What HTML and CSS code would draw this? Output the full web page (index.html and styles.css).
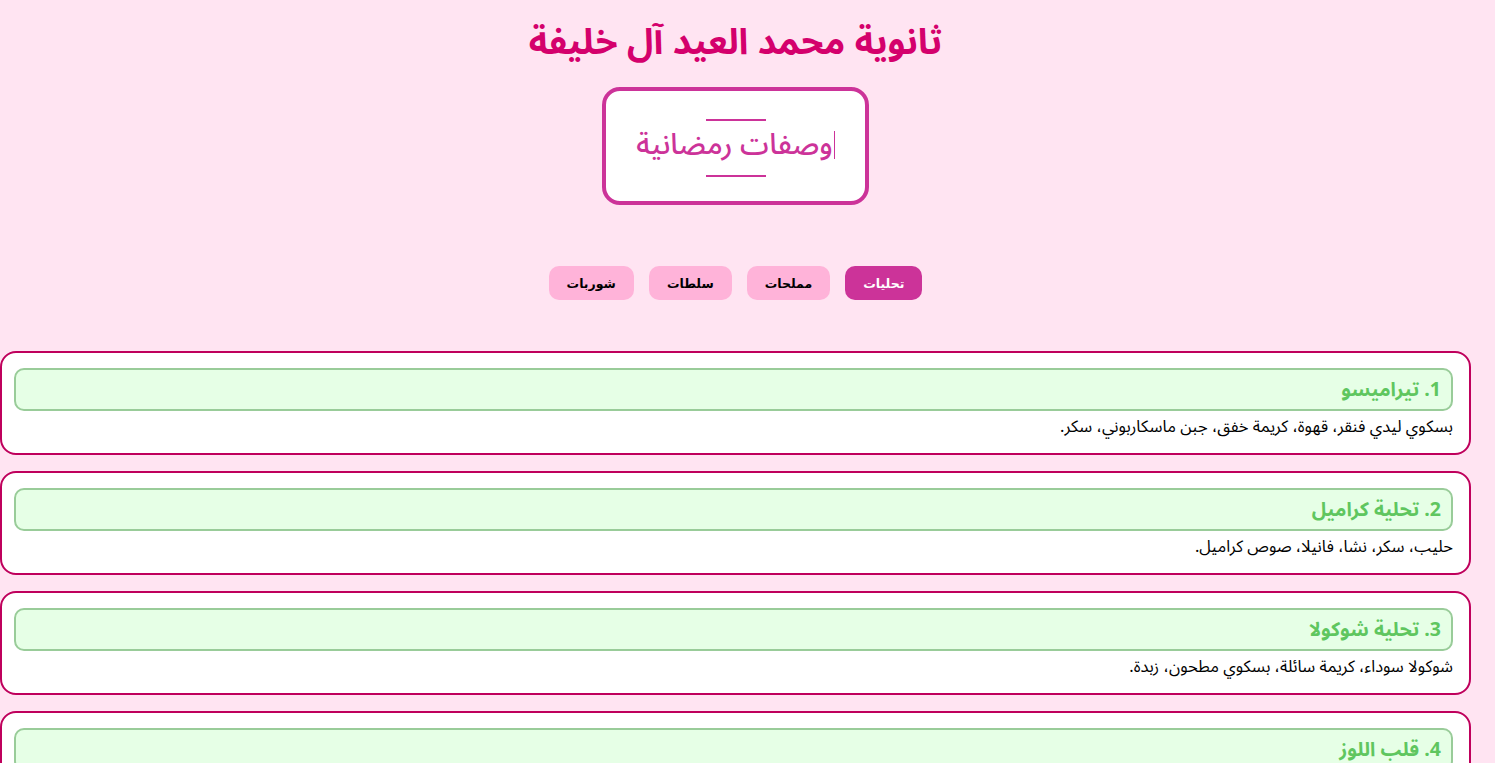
FILE: index.html
```html
<!DOCTYPE html>
<html lang="ar" dir="rtl">
<head>
    <meta charset="UTF-8">
    <meta name="viewport" content="width=device-width, initial-scale=1.0">
    <title>وصفات رمضانية</title>
    <link rel="stylesheet" href="styles.css">
</head>
<body>
    <div class="page">
        <h1>ثانوية محمد العيد آل خليفة</h1>

        <div class="banner">
            <span class="banner-line"></span>
            <h2 class="typing">وصفات رمضانية</h2>
            <span class="banner-line"></span>
        </div>

        <div class="tabs">
            <button class="tab active">تحليات</button>
            <button class="tab">مملحات</button>
            <button class="tab">سلطات</button>
            <button class="tab">شوربات</button>
        </div>

        <div class="recipes">
            <div class="recipe">
                <h3>1. تيراميسو</h3>
                <p>بسكوي ليدي فنقر، قهوة، كريمة خفق، جبن ماسكاربوني، سكر.</p>
            </div>
            <div class="recipe">
                <h3>2. تحلية كراميل</h3>
                <p>حليب، سكر، نشا، فانيلا، صوص كراميل.</p>
            </div>
            <div class="recipe">
                <h3>3. تحلية شوكولا</h3>
                <p>شوكولا سوداء، كريمة سائلة، بسكوي مطحون، زبدة.</p>
            </div>
            <div class="recipe">
                <h3>4. قلب اللوز</h3>
                <p>سميد، سكر، لوز، زبدة، ماء الزهر، عسل.</p>
            </div>
        </div>
    </div>
</body>
</html>
```

FILE: styles.css
```css
body {
    margin: 0;
    background-color: #ffe4f2;
    font-family: "Noto Sans Arabic", "Noto Naskh Arabic", "DejaVu Sans", sans-serif;
}

.page {
    margin-right: 24px;
    text-align: center;
}

h1 {
    margin: 0;
    padding-top: 21px;
    font-size: 36px;
    line-height: 44px;
    color: #d4006c;
}

/* Title box */
.banner {
    display: inline-flex;
    flex-direction: column;
    align-items: center;
    margin-top: 22px;
    padding: 28px 30px 24px;
    background-color: #ffffff;
    border: 4px solid #cc3399;
    border-radius: 18px;
}

.banner-line {
    width: 60px;
    height: 2px;
    background-color: #cc3399;
}

.typing {
    margin: 10px 0 16px;
    padding-right: 1px;
    border-right: 1px solid #cc3399;
    font-size: 29px;
    line-height: 28px;
    color: #cc3399;
    font-weight: 500;
}

/* Category buttons */
.tabs {
    display: flex;
    justify-content: center;
    gap: 15px;
    margin-top: 61px;
}

.tab {
    height: 34px;
    padding: 0 18px;
    border: none;
    border-radius: 10px;
    background-color: #ffb3d9;
    color: #000000;
    font-family: "DejaVu Sans", sans-serif;
    font-size: 12.5px;
    font-weight: bold;
    cursor: pointer;
}

.tab.active {
    background-color: #cc3399;
    color: #ffffff;
}

/* Recipe cards */
.recipes {
    display: flex;
    flex-direction: column;
    gap: 16px;
    margin-top: 51px;
}

.recipe {
    padding: 15px 16px 15px 12px;
    background-color: #ffffff;
    border: 2px solid #bf005c;
    border-radius: 16px;
    text-align: right;
}

.recipe h3 {
    margin: 0 0 5px;
    padding: 6px 10px;
    background-color: #e6ffe6;
    border: 2px solid #99cc99;
    border-radius: 10px;
    font-size: 19.5px;
    line-height: 27px;
    color: #5fc65f;
}

.recipe p {
    margin: 0;
    font-size: 16.5px;
    line-height: 22px;
    color: #000000;
}
```
